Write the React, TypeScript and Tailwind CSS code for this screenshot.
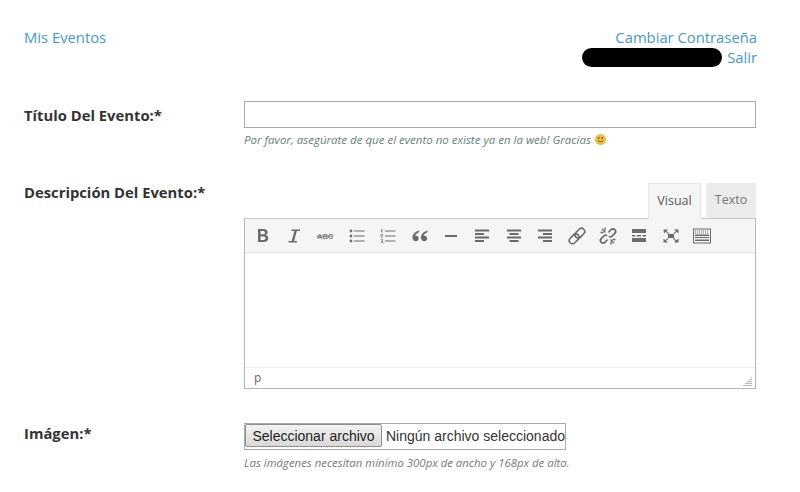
import type { ReactNode } from 'react'

const sans = "font-['Open_Sans',sans-serif]"

function Icon({ children }: { children: ReactNode }) {
  return (
    <span className="flex h-5 w-[31.4px] shrink-0 items-center justify-center">
      <svg width="20" height="20" viewBox="0 0 20 20" fill="#6b6b6b">
        {children}
      </svg>
    </span>
  )
}

const toolbarIcons: ReactNode[] = [
  <path key="b" fillRule="evenodd" d="M5 3h5.600c2.500 0 4 1.200 4 3.300 0 1.300-.7 2.300-1.800 2.800 1.500.4 2.500 1.600 2.500 3.200 0 2.400-1.800 3.700-4.500 3.700H5zm2.500 2.100v3.200h2.600c1.100 0 1.900-.6 1.900-1.600 0-1-.8-1.600-1.900-1.600zm0 5.300v3.500h3c1.200 0 2.100-.6 2.100-1.800 0-1.100-.9-1.700-2.100-1.700z" />,
  <path key="i" d="M7.500 3.500h8.500V5h-3.200l-2.700 10h2.900v1.500H4.500V15h3.200l2.700-10H7.500z" />,
  <g key="abc" opacity=".85">
    <text x="2" y="13" fontSize="7.500" fontFamily="'Liberation Sans',sans-serif" fontWeight="700">ABC</text>
    <rect x="1.500" y="9.700" width="17" height="1" />
  </g>,
  <g key="ul">
    <circle cx="4" cy="5" r="1.400" />
    <circle cx="4" cy="10" r="1.400" />
    <circle cx="4" cy="15" r="1.400" />
    <rect x="7" y="4.500" width="10.500" height="1" />
    <rect x="7" y="9.500" width="10.500" height="1" />
    <rect x="7" y="14.500" width="10.500" height="1" />
  </g>,
  <g key="ol">
    <rect x="3.300" y="3" width="1" height="3.500" />
    <path d="M2.500 8h2.500v2H3.400v.8H5v.7H2.500V9.500h1.700v-.8H2.500zM2.500 13.300H5v3.700H2.500v-.7h1.700v-.8H3v-.7h1.200v-.8H2.500z" opacity=".8" />
    <rect x="7" y="4.500" width="10.500" height="1" />
    <rect x="7" y="9.500" width="10.500" height="1" />
    <rect x="7" y="14.500" width="10.500" height="1" />
  </g>,
  <path key="q" d="M9 4.500C5.500 5.500 2.500 8 2.500 11.500c0 2.300 1.400 3.800 3.300 3.800 1.600 0 2.900-1.200 2.900-2.800 0-1.500-1.100-2.700-2.600-2.700-.4 0-.7.100-1 .2.400-1.600 2-3 3.900-3.700zm8.500 0C14 5.500 11 8 11 11.500c0 2.300 1.400 3.800 3.300 3.800 1.600 0 2.900-1.200 2.900-2.800 0-1.500-1.100-2.700-2.600-2.700-.4 0-.7.100-1 .2.400-1.600 2-3 3.900-3.700z" />,
  <rect key="hr" x="4" y="9" width="12" height="2" />,
  <g key="al">
    <rect x="3" y="3.500" width="14" height="2" />
    <rect x="3" y="7" width="9" height="2" />
    <rect x="3" y="10.500" width="14" height="2" />
    <rect x="3" y="14" width="9" height="2" />
  </g>,
  <g key="ac">
    <rect x="3" y="3.500" width="14" height="2" />
    <rect x="5.500" y="7" width="9" height="2" />
    <rect x="3" y="10.500" width="14" height="2" />
    <rect x="5.500" y="14" width="9" height="2" />
  </g>,
  <g key="ar">
    <rect x="3" y="3.500" width="14" height="2" />
    <rect x="8" y="7" width="9" height="2" />
    <rect x="3" y="10.500" width="14" height="2" />
    <rect x="8" y="14" width="9" height="2" />
  </g>,
  <g key="link" fill="none" stroke="#6b6b6b" strokeWidth="1.600" transform="rotate(-45 10 10)">
    <rect x="0.500" y="6.800" width="11" height="6.400" rx="3.200" />
    <rect x="8.500" y="6.800" width="11" height="6.400" rx="3.200" />
  </g>,
  <g key="unlink" fill="none" stroke="#6b6b6b" strokeWidth="1.700">
    <path d="M10.500 6.500l2.300-2.700c1.200-1.300 3-1.300 4-.2s1 2.800-.2 4l-2.600 2.600c-1 .9-2.200.9-3.100.2" />
    <path d="M9.500 13.500l-2.300 2.700c-1.200 1.300-3 1.300-4 .2s-1-2.800.2-4l2.600-2.600c1-.9 2.200-.9 3.100-.2" />
    <path d="M4 3l3.500 3.500M2.500 6.500h3M7 1.500v3M16 17l-3.500-3.500M17.500 13.500h-3M13 18.500v-3" strokeWidth="1.300" />
  </g>,
  <g key="more">
    <rect x="3" y="3" width="14" height="4" />
    <rect x="3" y="9" width="3.500" height="1.500" />
    <rect x="8" y="9" width="4" height="1.500" />
    <rect x="13.500" y="9" width="3.500" height="1.500" />
    <rect x="3" y="12" width="14" height="4" />
  </g>,
  <g key="full">
    <rect x="7" y="8" width="6" height="4" />
    <path d="M2.500 3.500H7L5.600 4.900l2.400 2.300-.8.800-2.400-2.300L3 7.500zM17.500 3.500v4l-1.800-1.800-2.400 2.300-.8-.8 2.400-2.300L13 3.500zM2.500 16.500v-4l1.800 1.800 2.400-2.300.8.800-2.400 2.300L7 16.500zM17.500 16.500H13l1.400-1.400-2.400-2.300.8-.8 2.400 2.300 2.300-1.800z" />
  </g>,
  <g key="kbd">
    <path fillRule="evenodd" d="M1 2.500h18v15H1zM2 3.500v13h16v-13z" />
    <path d="M3 5h14" stroke="#6b6b6b" strokeDasharray="1 1" />
    <path d="M3 7h14" stroke="#6b6b6b" strokeDasharray="1 1" />
    <path d="M3 8.500h14v1.500H3zM3 11h14v1H3z" />
    <path d="M3 13.500h14v1.500H3z" />
  </g>,
]

function Field({ label, className, labelClass, children }: { label: string; className?: string; labelClass?: string; children: ReactNode }) {
  return (
    <div className={`flex ${className ?? ''}`}>
      <label className={`w-[220px] shrink-0 text-[14.800px] leading-[19px] font-bold text-[#333] ${labelClass ?? ''}`}>{label}</label>
      <div className="min-w-0 flex-1">{children}</div>
    </div>
  )
}

export default function App() {
  return (
    <div className={`${sans} h-[492px] w-[800px] overflow-hidden bg-white pt-[27px] pr-[43px] pl-[24px]`}>
      <div className="flex justify-between text-[14.800px] leading-[20px] text-[#459cc4]">
        <a>Mis Eventos</a>
        <div className="flex flex-col items-end">
          <a>Cambiar Contraseña</a>
          <div className="flex items-center gap-[5px]">
            <span className="h-[19px] w-[140px] rounded-full bg-black" />
            <a>Salir</a>
          </div>
        </div>
      </div>

      <Field label="Título Del Evento:*" className="mt-[34px]" labelClass="pt-[5px]">
        <input type="text" className="block h-[27px] w-[512px] border border-[#a9a9a9] bg-white" />
        <p className="mt-[4px] flex items-center gap-[4px] text-[11.500px] leading-[15px] text-[#66807a] italic">
          Por favor, asegúrate de que el evento no existe ya en la web! Gracias
          <svg width="11" height="11" viewBox="0 0 11 11">
            <circle cx="5.500" cy="5.500" r="5.500" fill="#e8c04a" />
            <circle cx="3.700" cy="4" r="0.900" fill="#7a5a20" />
            <circle cx="7.300" cy="4" r="0.900" fill="#7a5a20" />
            <path d="M2.800 6.500c.6 1.500 4.800 1.500 5.400 0" fill="none" stroke="#7a5a20" strokeWidth=".9" />
          </svg>
        </p>
      </Field>

      <Field label="Descripción Del Evento:*" className="mt-[36px]">
        <div className="w-[512px]">
          <div className="flex h-[35px] justify-end">
            <span className="-mb-px flex h-[36px] w-[53px] items-center justify-center border border-b-0 border-[#e5e5e5] bg-[#f5f5f5] text-[12.500px] text-[#555]">
              Visual
            </span>
            <span className="ml-[5px] flex h-[35px] w-[50px] items-center justify-center bg-[#ebebeb] text-[12.500px] text-[#777]">
              Texto
            </span>
          </div>
          <div className="border-r border-b border-l border-[#b5b5b5]">
            <div className="flex h-[35px] items-center border-t border-b border-t-[#c9c9c9] border-b-[#e5e5e5] bg-[#f5f5f5] pl-[2px]">
              {toolbarIcons.map((icon, i) => (
                <Icon key={i}>{icon}</Icon>
              ))}
            </div>
            <div className="h-[114px] bg-white" />
            <div className="relative flex h-[21px] items-center border-t border-[#eeeeee] bg-white pl-[9px] text-xs text-[#666]">
              p
              <svg className="absolute right-[2px] bottom-[2px]" width="10" height="10" viewBox="0 0 10 10" stroke="#b5b5b5">
                <path d="M8 1.500h1M6 3.500h3M4 5.500h5M2 7.500h7M0 9.500h9" />
              </svg>
            </div>
          </div>
        </div>
      </Field>

      <Field label="Imágen:*" className="mt-[34px]" labelClass="pt-[1px]">
        <div className="flex h-[27px] w-[322px] items-start border border-[#a9a9a9] pt-0 font-['Liberation_Sans',sans-serif] text-sm text-[#333]">
          <span className="flex h-[23px] w-[138px] items-center justify-center rounded-[2px] border border-[#8f8f8f] bg-gradient-to-b from-[#f2f2f2] to-[#d9d9d9] text-[#222]">
            Seleccionar archivo
          </span>
          <span className="mt-[2px] ml-[4px] whitespace-nowrap">Ningún archivo seleccionado</span>
        </div>
        <p className="mt-[5px] text-[11.400px] leading-[15px] text-[#777] italic">
          Las imágenes necesitan mínimo 300px de ancho y 168px de alto.
        </p>
      </Field>
    </div>
  )
}
